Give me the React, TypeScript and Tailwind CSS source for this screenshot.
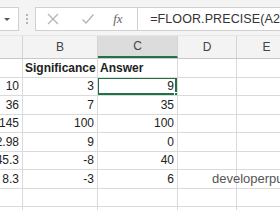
import React from 'react';

const cols = [
  { key: 'A', w: 'w-[23px]' },
  { key: 'B', w: 'w-[75px]' },
  { key: 'C', w: 'w-[80px]' },
  { key: 'D', w: 'w-[59px]' },
  { key: 'E', w: 'w-[60px]' },
];

const rows: string[][] = [
  ['', 'Significance', 'Answer', '', ''],
  ['10', '3', '9', '', ''],
  ['36', '7', '35', '', ''],
  ['145', '100', '100', '', ''],
  ['2.98', '9', '0', '', ''],
  ['45.3', '-8', '40', '', ''],
  ['8.3', '-3', '6', '', ''],
  ['', '', '', '', ''],
  ['', '', '', '', ''],
];

export default function App() {
  return (
    <div
      className="w-[280px] h-[210px] overflow-hidden bg-white text-[#222]"
      style={{ fontFamily: '"Liberation Sans", Arial, sans-serif' }}
    >
      {/* Formula bar */}
      <div className="h-[35px] bg-[#f4f4f4] flex items-start pt-[7px]">
        <div className="w-[26px] h-[24px] -ml-[1px] bg-white border border-[#d0d0d0] flex items-center justify-end pr-[8px]">
          <div className="w-0 h-0 border-l-[3px] border-r-[3px] border-t-[3px] border-l-transparent border-r-transparent border-t-[#555]" />
        </div>
        <div className="w-[27px] h-[24px] flex flex-col items-center justify-center gap-[2px]">
          <div className="w-[2px] h-[2px] bg-[#b5b5b5]" />
          <div className="w-[2px] h-[2px] bg-[#b5b5b5]" />
          <div className="w-[2px] h-[2px] bg-[#b5b5b5]" />
        </div>
        <div className="flex-1 h-[24px] bg-white border border-[#d0d0d0] border-r-0 flex items-center">
          <div className="w-[101px] flex items-center">
            <svg width="14" height="14" viewBox="0 0 14 14" className="ml-[10px]">
              <path d="M2 2 L12 12 M12 2 L2 12" stroke="#b3b3b3" strokeWidth="1.3" fill="none" />
            </svg>
            <svg width="14" height="14" viewBox="0 0 14 14" className="ml-[21px]">
              <path d="M1.5 7.5 L5 11 L12.5 2.5" stroke="#b3b3b3" strokeWidth="1.3" fill="none" />
            </svg>
            <span
              className="ml-[18px] italic text-[13px] text-[#666]"
              style={{ fontFamily: '"Liberation Serif", serif' }}
            >
              fx
            </span>
          </div>
          <div className="h-[24px] border-l border-[#d0d0d0] flex items-center pl-[12px]">
            <span className="text-[12.5px] whitespace-nowrap text-[#333] tracking-[0.1px]">
              =FLOOR.PRECISE(A2
            </span>
          </div>
        </div>
      </div>

      {/* Column headers */}
      <div className="h-[24px] flex bg-[#f3f3f3] border-b border-[#c8c8c8] border-t border-t-[#e6e6e6]">
        {cols.map((c) => (
          <div
            key={c.key}
            className={`${c.w} shrink-0 h-full flex items-center justify-center text-[12px] border-r border-[#d4d4d4] text-[#444] ${
              c.key === 'C' ? 'bg-[#dcdcdc] border-b-2 border-b-[#217346]' : ''
            }`}
          >
            {c.key === 'A' ? '' : c.key}
          </div>
        ))}
      </div>

      {/* Grid rows */}
      {rows.map((r, ri) => (
        <div key={ri} className="h-[18.5px] flex border-b border-[#dadada]">
          {cols.map((c, ci) => {
            const v = r[ci];
            const header = ri === 0;
            const selected = ri === 1 && ci === 2;
            const watermark = ri === 6 && ci === 3;
            return (
              <div
                key={c.key}
                className={`${c.w} shrink-0 h-full relative flex items-center border-r border-[#dadada] ${
                  watermark ? 'z-10' : 'overflow-hidden'
                } ${header ? 'justify-start pl-[2px]' : 'justify-end pr-[3px]'}`}
              >
                <span className={`whitespace-nowrap shrink-0 text-[12px] ${header ? 'font-bold' : ''}`}>
                  {v}
                </span>
                {selected && (
                  <div className="absolute -left-[1px] -top-[1px] right-0 bottom-0 border-2 border-[#217346]">
                    <div className="absolute -right-[4px] -bottom-[4px] w-[5px] h-[5px] bg-[#217346] border border-white" />
                  </div>
                )}
                {watermark && (
                  <span className="absolute left-[34px] text-[13px] text-[#555] whitespace-nowrap">
                    developerpublish.com
                  </span>
                )}
              </div>
            );
          })}
        </div>
      ))}
    </div>
  );
}
